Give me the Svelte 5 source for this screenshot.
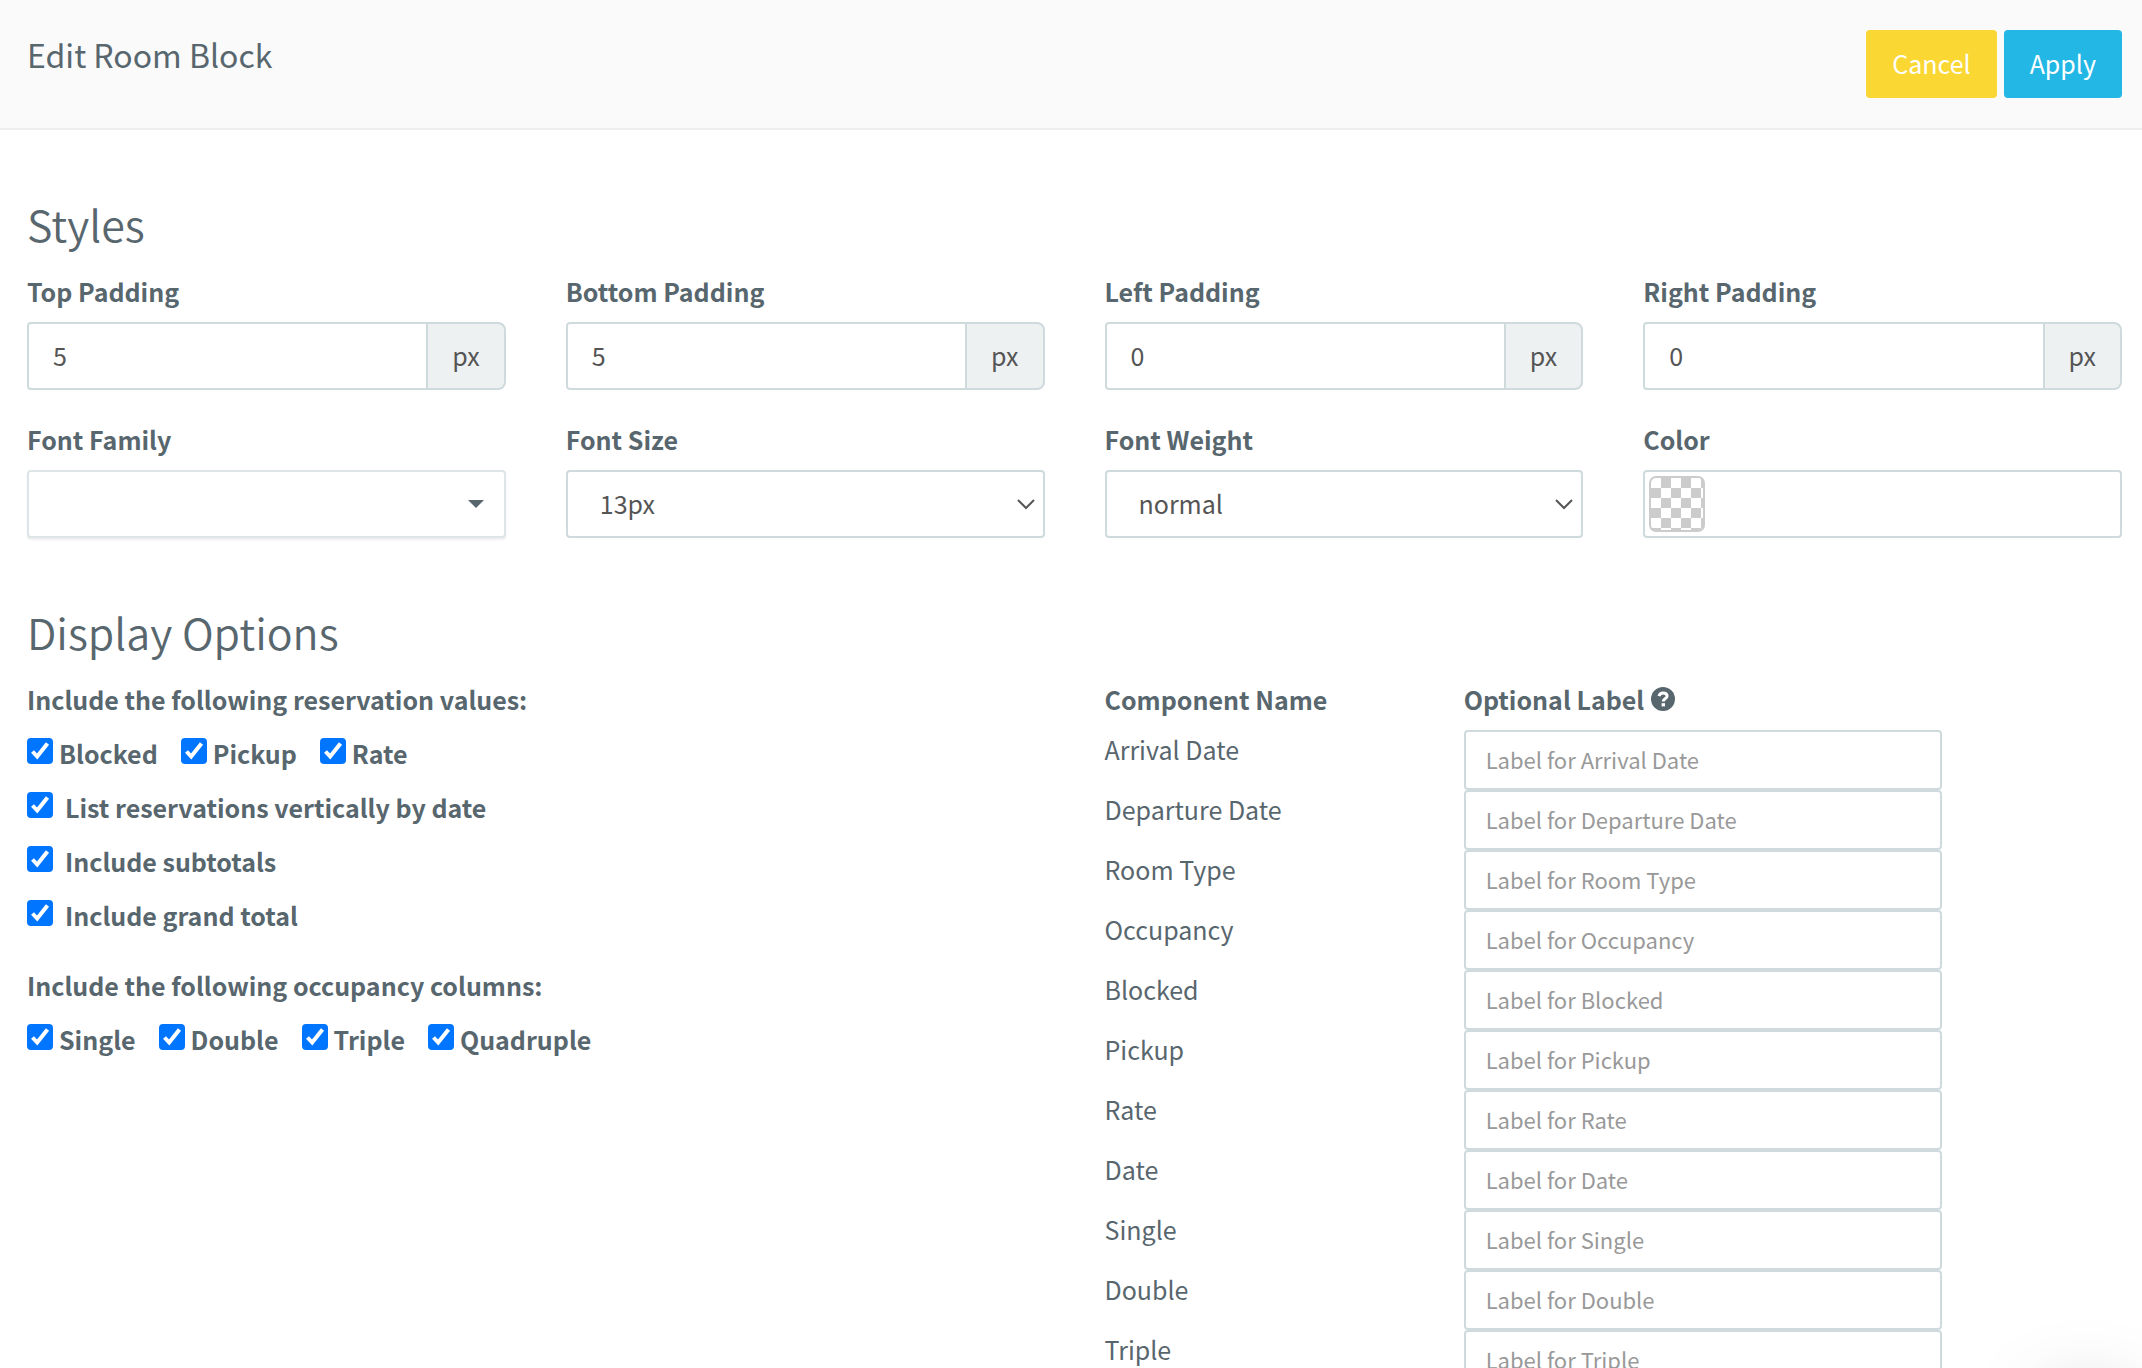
<script lang="ts">
	type Option = { label: string; checked: boolean };

	let paddings = $state([
		{ id: 'topPadding', label: 'Top Padding', value: '5' },
		{ id: 'bottomPadding', label: 'Bottom Padding', value: '5' },
		{ id: 'leftPadding', label: 'Left Padding', value: '0' },
		{ id: 'rightPadding', label: 'Right Padding', value: '0' }
	]);

	let fontFamily = $state('');
	let fontSize = $state('13px');
	let fontWeight = $state('normal');
	let color = $state('');

	let reservationValues = $state<Option[]>([
		{ label: 'Blocked', checked: true },
		{ label: 'Pickup', checked: true },
		{ label: 'Rate', checked: true }
	]);

	let layoutOptions = $state<Option[]>([
		{ label: 'List reservations vertically by date', checked: true },
		{ label: 'Include subtotals', checked: true },
		{ label: 'Include grand total', checked: true }
	]);

	let occupancyColumns = $state<Option[]>([
		{ label: 'Single', checked: true },
		{ label: 'Double', checked: true },
		{ label: 'Triple', checked: true },
		{ label: 'Quadruple', checked: true }
	]);

	let components = $state(
		[
			'Arrival Date',
			'Departure Date',
			'Room Type',
			'Occupancy',
			'Blocked',
			'Pickup',
			'Rate',
			'Date',
			'Single',
			'Double',
			'Triple'
		].map((name) => ({ name, id: 'label' + name.replace(' ', ''), value: '' }))
	);
</script>

{#snippet check(option: Option)}
	<label class="check">
		<input type="checkbox" bind:checked={option.checked} />
		<svg class="tick" viewBox="0 0 26 26" aria-hidden="true">
			<path d="M5.500 13.500l4.700 5L20.500 5.500" />
		</svg>
		<span>{option.label}</span>
	</label>
{/snippet}

<div class="page">
	<header class="topBar">
		<h1>Edit Room Block</h1>
		<div class="actions">
			<button type="button" class="cancelButton">Cancel</button>
			<button type="button" class="applyButton">Apply</button>
		</div>
	</header>

	<main>
		<h2>Styles</h2>
		<div class="styleGrid">
			{#each paddings as item (item.id)}
				<div class="field">
					<label for={item.id}>{item.label}</label>
					<div class="inputGroup">
						<input id={item.id} class="control" type="text" bind:value={item.value} />
						<span class="addon">px</span>
					</div>
				</div>
			{/each}
			<div class="field">
				<label for="fontFamily">Font Family</label>
				<div class="selectWrap">
					<select id="fontFamily" class="control fontFamily" bind:value={fontFamily}>
						<option value=""></option>
					</select>
					<svg class="caret" viewBox="0 0 16 8" aria-hidden="true"><path d="M0 0h16L8 8z" /></svg>
				</div>
			</div>
			<div class="field">
				<label for="fontSize">Font Size</label>
				<div class="selectWrap">
					<select id="fontSize" class="control" bind:value={fontSize}>
						<option>13px</option>
					</select>
					<svg class="chevron" viewBox="0 0 18 12" aria-hidden="true"><path d="M1 2l8 8 8-8" /></svg>
				</div>
			</div>
			<div class="field">
				<label for="fontWeight">Font Weight</label>
				<div class="selectWrap">
					<select id="fontWeight" class="control" bind:value={fontWeight}>
						<option>normal</option>
					</select>
					<svg class="chevron" viewBox="0 0 18 12" aria-hidden="true"><path d="M1 2l8 8 8-8" /></svg>
				</div>
			</div>
			<div class="field">
				<label for="color">Color</label>
				<div class="colorBox">
					<button type="button" class="swatch" aria-label="Pick a color"></button>
					<input id="color" type="text" bind:value={color} />
				</div>
			</div>
		</div>

		<h2>Display Options</h2>
		<div class="optionGrid">
			<div class="options">
				<fieldset>
					<legend>Include the following reservation values:</legend>
					<div class="checkRow">
						{#each reservationValues as option (option.label)}
							{@render check(option)}
						{/each}
					</div>
				</fieldset>
				<div class="checkList">
					{#each layoutOptions as option (option.label)}
						{@render check(option)}
					{/each}
				</div>
				<fieldset>
					<legend>Include the following occupancy columns:</legend>
					<div class="checkRow">
						{#each occupancyColumns as option (option.label)}
							{@render check(option)}
						{/each}
					</div>
				</fieldset>
			</div>

			<table>
				<thead>
					<tr>
						<th class="nameCol" scope="col">Component Name</th>
						<th class="labelCol" scope="col">
							<span class="withHelp">
								Optional Label
								<svg class="help" viewBox="0 0 24 24" aria-hidden="true">
									<circle cx="12" cy="12" r="12" />
									<path d="M8 9.200C8.500 7 10 5.900 12.200 5.900c2.200 0 3.900 1.300 3.900 3.200 0 2.800-3.800 2.700-3.800 5.300" />
									<rect x="10.600" y="16.200" width="3.400" height="3.200" />
								</svg>
							</span>
						</th>
						<td></td>
					</tr>
				</thead>
				<tbody>
					{#each components as item (item.id)}
						<tr>
							<th scope="row"><label for={item.id}>{item.name}</label></th>
							<td>
								<input
									id={item.id}
									class="control small"
									type="text"
									placeholder={`Label for ${item.name}`}
									bind:value={item.value}
								/>
							</td>
							<td></td>
						</tr>
					{/each}
				</tbody>
			</table>
		</div>
	</main>

	<div class="cornerShadow"></div>
</div>

<style>
	.page {
		--textColor: #58666e;
		--lineColor: #cfdadd;
		height: 100vh;
		overflow: hidden;
		background: #fff;
		color: var(--textColor);
		font-family: 'Noto Sans CJK SC', 'Open Sans', sans-serif;
		font-size: 25px;
		line-height: 38px;
	}

	.page * {
		box-sizing: border-box;
	}

	button,
	input,
	select {
		margin: 0;
		font: inherit;
	}

	.topBar {
		display: flex;
		align-items: flex-start;
		justify-content: space-between;
		padding: 30px 20px 30px 27px;
		border-bottom: 2px solid #edeeee;
		background: #fafafa;
	}

	h1 {
		margin: 4px 0 0;
		font-size: 32px;
		font-weight: 400;
		line-height: 40px;
	}

	.actions {
		display: flex;
		gap: 7px;
	}

	.actions button {
		height: 68px;
		padding: 0 26px 2px;
		border: 0;
		border-radius: 4px;
		color: #fff;
	}

	.actions .cancelButton {
		background: #fad733;
	}

	.actions .applyButton {
		background: #23b7e5;
	}

	main {
		padding: 0 20px 0 27px;
	}

	h2 {
		margin: 71px 0 27px;
		font-size: 43px;
		font-weight: 350;
		line-height: 44px;
	}

	.styleGrid {
		display: grid;
		grid-template-columns: repeat(4, 1fr);
		gap: 30px 60px;
	}

	.field {
		display: grid;
		gap: 12px;
		min-width: 0;
	}

	.field > label {
		font-weight: 700;
	}

	.control {
		width: 100%;
		height: 68px;
		padding: 0 24px 2px;
		border: 2px solid var(--lineColor);
		border-radius: 4px;
		background: #fff;
		color: #555;
	}

	.inputGroup {
		display: flex;
	}

	.inputGroup .control {
		flex: 1;
		min-width: 0;
		border-radius: 4px 0 0 4px;
	}

	.addon {
		display: flex;
		align-items: center;
		padding: 0 24px 2px;
		border: 2px solid var(--lineColor);
		border-left: 0;
		border-radius: 0 8px 8px 0;
		background: #edf1f2;
		color: #555;
	}

	.selectWrap {
		position: relative;
	}

	select.control {
		display: block;
		padding: 0 32px 2px;
		appearance: none;
	}

	.control.fontFamily {
		border-color: #dee5e7;
		box-shadow: 0 2px 2px rgba(90, 90, 90, 0.1);
	}

	.caret,
	.chevron {
		position: absolute;
		pointer-events: none;
	}

	.caret {
		top: 30px;
		right: 22px;
		width: 16px;
		height: 8px;
		fill: var(--textColor);
	}

	.chevron {
		top: 28px;
		right: 10px;
		width: 18px;
		height: 12px;
		fill: none;
		stroke: #555;
		stroke-width: 2;
	}

	.colorBox {
		display: flex;
		align-items: center;
		height: 68px;
		padding: 0 4px;
		border: 2px solid var(--lineColor);
		border-radius: 4px;
	}

	.colorBox input {
		flex: 1;
		min-width: 0;
		padding: 0 16px;
		border: 0;
		background: transparent;
		color: #555;
	}

	.swatch {
		width: 56px;
		height: 56px;
		padding: 0;
		border: 2px solid #ccc;
		border-radius: 7px;
		background: conic-gradient(#ccc 25%, #fff 0 50%, #ccc 0 75%, #fff 0) 0 0 / 20px 20px;
		background-origin: padding-box;
	}

	.optionGrid {
		display: grid;
		grid-template-columns: 1fr 1fr;
		gap: 60px;
	}

	.options {
		font-weight: 700;
	}

	fieldset {
		min-width: 0;
		margin: 0;
		padding: 0;
		border: 0;
	}

	legend {
		margin-bottom: 16px;
		padding: 0;
	}

	.checkRow {
		display: flex;
		gap: 23px;
	}

	.checkList {
		display: grid;
		gap: 16px;
		margin: 16px 0 32px;
	}

	.check {
		position: relative;
		display: flex;
		align-items: flex-start;
		gap: 6px;
	}

	.checkList .check {
		gap: 12px;
	}

	.check input {
		width: 26px;
		height: 26px;
		margin-top: 4px;
		border: 2px solid #767676;
		border-radius: 4px;
		appearance: none;
	}

	.check input:checked {
		border-color: #0075ff;
		background: #0075ff;
	}

	.tick {
		position: absolute;
		top: 4px;
		left: 0;
		width: 26px;
		height: 26px;
		fill: none;
		stroke: #fff;
		stroke-width: 4;
		pointer-events: none;
	}

	.check input:not(:checked) + .tick {
		display: none;
	}

	table {
		width: 100%;
		align-self: start;
		border-collapse: collapse;
		table-layout: fixed;
	}

	th,
	td {
		padding: 0;
		text-align: left;
		vertical-align: top;
	}

	thead th {
		padding-bottom: 12px;
		font-weight: 700;
	}

	.nameCol {
		width: 35.3%;
	}

	.labelCol {
		width: 47%;
	}

	tbody th {
		font-weight: 400;
	}

	.withHelp {
		display: flex;
		align-items: center;
		gap: 7px;
	}

	.help {
		width: 24px;
		height: 24px;
		fill: var(--textColor);
	}

	.help path {
		fill: none;
		stroke: #fff;
		stroke-width: 3;
	}

	.help rect {
		fill: #fff;
	}

	.control.small {
		display: block;
		height: 60px;
		padding: 0 20px 2px;
		font-size: 22px;
	}

	.control.small::placeholder {
		color: #999;
		opacity: 1;
	}

	/* glow of the round launcher parked under the bottom edge */
	.cornerShadow {
		position: fixed;
		right: 20px;
		bottom: -103px;
		width: 72px;
		height: 72px;
		border-radius: 50%;
		box-shadow: 0 0 80px rgba(0, 0, 0, 0.35);
	}
</style>
